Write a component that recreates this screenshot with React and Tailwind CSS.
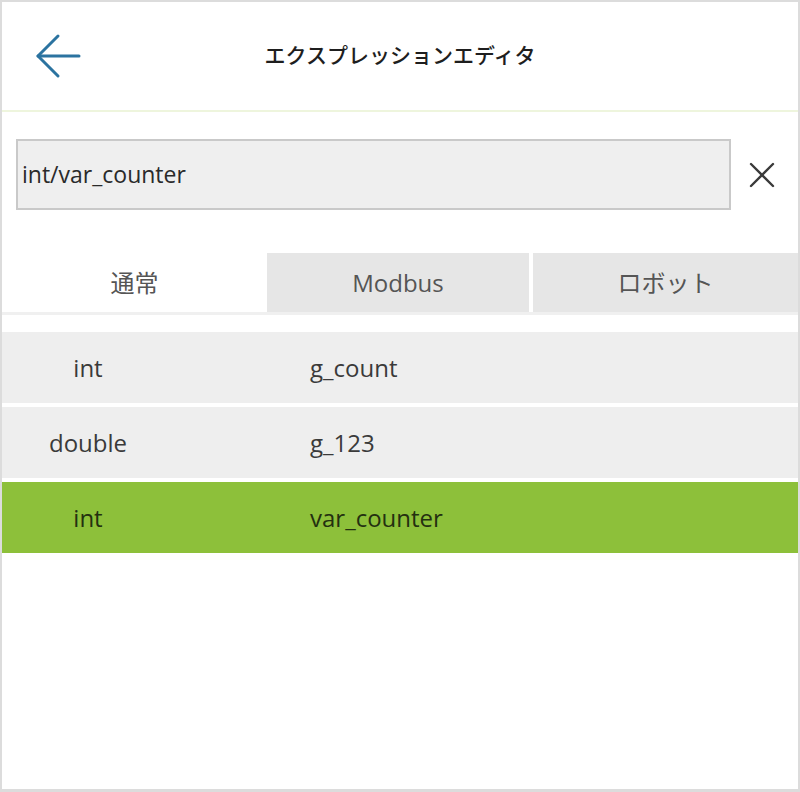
import React from "react";

const rows = [
  { type: "int", name: "g_count", selected: false },
  { type: "double", name: "g_123", selected: false },
  { type: "int", name: "var_counter", selected: true },
];

const font = { fontFamily: '"Open Sans", "Noto Sans CJK JP", sans-serif' };

export default function App() {
  return (
    <div
      className="w-[800px] h-[792px] border-2 border-b-[3px] border-[#dcdcdc] bg-white flex flex-col text-[#3a3a3a]"
      style={font}
    >
      {/* header */}
      <div className="h-[108px] flex items-center relative shrink-0">
        <button className="ml-[31px] w-[50px] h-[50px] flex items-center justify-center">
          <svg width="46" height="46" viewBox="0 0 46 46" fill="none" stroke="#2b73a0" strokeWidth="3" strokeLinecap="round" strokeLinejoin="round">
            <path d="M3 23 H44" />
            <path d="M23 3 L3 23 L23 43" />
          </svg>
        </button>
        <div className="absolute inset-0 flex items-center justify-center pointer-events-none">
          <span className="text-[21px] font-medium text-[#1e1e1e]">エクスプレッションエディタ</span>
        </div>
      </div>
      <div className="h-[2px] bg-[#eef5dd] shrink-0" />

      {/* search input */}
      <div className="flex items-center mt-[27px] ml-[14px]">
        <div className="w-[715px] h-[71px] bg-[#efefef] border-2 border-[#c9c9c9] flex items-center px-[4px]">
          <span className="text-[23px] text-[#2a2a2a]">int/var_counter</span>
        </div>
        <button className="ml-[16px] w-[30px] h-[30px] flex items-center justify-center">
          <svg width="26" height="26" viewBox="0 0 26 26" stroke="#3a3a3a" strokeWidth="2.4" strokeLinecap="round">
            <path d="M2 2 L24 24" />
            <path d="M24 2 L2 24" />
          </svg>
        </button>
      </div>

      {/* tabs */}
      <div className="flex mt-[43px] h-[59px] text-[24px] text-[#555555]">
        <div className="w-[265px] flex items-center justify-center bg-white">通常</div>
        <div className="w-[262px] flex items-center justify-center bg-[#e6e6e6]">Modbus</div>
        <div className="ml-[4px] flex-1 flex items-center justify-center bg-[#e6e6e6]">ロボット</div>
      </div>
      <div className="h-[3px] bg-[#f0f0f0]" />

      {/* variable list */}
      <div className="mt-[17px] flex flex-col gap-[4px]">
        {rows.map((r, i) => (
          <div
            key={i}
            className={`h-[71px] flex items-center text-[24px] ${r.selected ? "bg-[#8dc03a] text-[#243010]" : "bg-[#eeeeee] text-[#3a3a3a]"}`}
          >
            <div className="w-[172px] text-center">{r.type}</div>
            <div className="ml-[136px]">{r.name}</div>
          </div>
        ))}
      </div>
    </div>
  );
}
